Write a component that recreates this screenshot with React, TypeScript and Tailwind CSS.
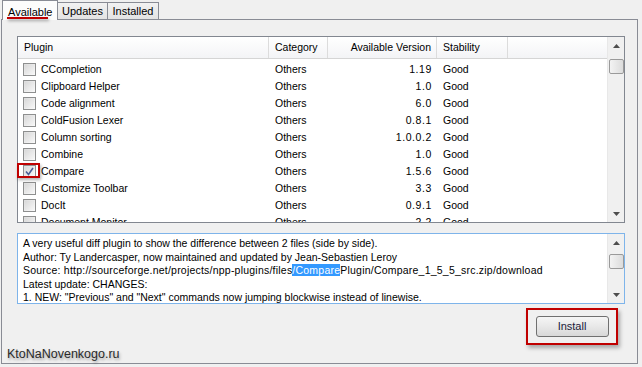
import React from "react";

const rows: [string, string, string, string][] = [
  ["CCompletion", "Others", "1.19", "Good"],
  ["Clipboard Helper", "Others", "1.0", "Good"],
  ["Code alignment", "Others", "6.0", "Good"],
  ["ColdFusion Lexer", "Others", "0.8.1", "Good"],
  ["Column sorting", "Others", "1.0.0.2", "Good"],
  ["Combine", "Others", "1.0", "Good"],
  ["Compare", "Others", "1.5.6", "Good"],
  ["Customize Toolbar", "Others", "3.3", "Good"],
  ["DocIt", "Others", "0.9.1", "Good"],
  ["Document Monitor", "Others", "2.2", "Good"],
];

function Checkbox({ checked }: { checked?: boolean }) {
  return (
    <div className="w-[13px] h-[13px] border border-[#8e8f8f] bg-gradient-to-br from-[#dcdcdc] to-[#fbfbfb] flex items-center justify-center shrink-0">
      <div className="w-[9px] h-[9px] bg-gradient-to-br from-[#d9d9d9] to-[#f6f6f6] flex items-center justify-center">
        {checked && (
          <svg width="9" height="9" viewBox="0 0 9 9">
            <path d="M1 4.5 L3.5 7.5 L8 1" stroke="#4a5f97" strokeWidth="1.6" fill="none" />
          </svg>
        )}
      </div>
    </div>
  );
}

function UpArrow() {
  return (
    <svg width="7" height="4" viewBox="0 0 7 4">
      <path d="M0 4 L3.5 0 L7 4 Z" fill="#4d4d4d" />
    </svg>
  );
}
function DownArrow() {
  return (
    <svg width="7" height="4" viewBox="0 0 7 4">
      <path d="M0 0 L3.5 4 L7 0 Z" fill="#4d4d4d" />
    </svg>
  );
}

function Scrollbar({ thumbTop }: { thumbTop: number }) {
  return (
    <div className="w-[17px] h-full shrink-0 bg-[#f0f0f0] border-l border-[#e8e8e8] flex flex-col items-center">
      <div className="h-[17px] w-full shrink-0 flex items-center justify-center">
        <UpArrow />
      </div>
      <div className="flex-1 w-full relative">
        <div
          className="absolute left-[1px] w-[15px] h-[15px] rounded-[2px] border border-[#9a9a9a] bg-gradient-to-r from-[#f3f3f3] to-[#dcdcdc]"
          style={{ top: thumbTop }}
        />
      </div>
      <div className="h-[17px] w-full shrink-0 flex items-center justify-center">
        <DownArrow />
      </div>
    </div>
  );
}

export default function App() {
  return (
    <div
      className="w-[642px] h-[367px] bg-[#f0f0f0] relative overflow-hidden text-[10.5px] text-black"
      style={{ fontFamily: '"Liberation Sans", Arial, sans-serif' }}
    >
      {/* Tabs */}
      <div className="flex items-end h-[20px] pl-[2px] relative z-10">
        <div className="relative w-[56px] h-[20px] bg-[#fcfcfc] border border-b-0 border-[#898c95] flex items-start pt-[3px] pl-[5px] text-[11px]">
          <span>Available</span>
          <div className="absolute left-[4px] top-[16px] w-[41px] h-[2px] bg-[#c00000] shadow-[1px_2px_3px_rgba(0,0,0,0.35)]" />
        </div>
        <div className="w-[50px] h-[17px] mb-[1px] bg-gradient-to-b from-[#f2f2f2] to-[#e3e3e3] border border-b-0 border-l-0 border-[#898c95] flex items-center justify-center text-[11px]">
          Updates
        </div>
        <div className="w-[51px] h-[17px] mb-[1px] bg-gradient-to-b from-[#f2f2f2] to-[#e3e3e3] border border-b-0 border-l-0 border-[#898c95] flex items-center justify-center text-[11px]">
          Installed
        </div>
      </div>

      {/* Panel */}
      <div className="ml-[1px] -mt-[1px] w-[637px] h-[345px] border border-[#898c95] bg-[#f0f0f0] pt-[16px] pl-[15px] flex flex-col">
        {/* List */}
        <div className="w-[608px] h-[187px] shrink-0 border border-[#828790] bg-white flex">
          <div className="flex-1 flex flex-col overflow-hidden">
            <div className="h-[22px] shrink-0 flex bg-gradient-to-b from-white to-[#f3f4f6] border-b border-[#d5d5d5] text-[#000]">
              <div className="w-[251px] pl-[6px] flex items-center border-r border-[#dcdcdc]">Plugin</div>
              <div className="w-[59px] pl-[6px] flex items-center border-r border-[#dcdcdc]">Category</div>
              <div className="w-[109px] pr-[5px] flex items-center justify-end border-r border-[#dcdcdc]">Available Version</div>
              <div className="w-[71px] pl-[6px] flex items-center border-r border-[#dcdcdc]">Stability</div>
              <div className="flex-1" />
            </div>
            <div className="pt-[2px] flex flex-col">
              {rows.map(([name, cat, ver, stab]) => (
                <div key={name} className="h-[17px] flex items-center shrink-0">
                  <div className="w-[251px] flex items-center pl-[5px] gap-[5px]">
                    <Checkbox checked={name === "Compare"} />
                    <span>{name}</span>
                  </div>
                  <div className="w-[59px] pl-[6px]">{cat}</div>
                  <div className="w-[109px] pr-[5px] text-right tracking-[0.6px]">{ver}</div>
                  <div className="w-[71px] pl-[6px]">{stab}</div>
                </div>
              ))}
            </div>
          </div>
          <Scrollbar thumbTop={5} />
        </div>

        {/* Description */}
        <div className="mt-[10px] w-[608px] h-[71px] shrink-0 border border-[#7eb4ea] bg-white flex">
          <div className="flex-1 pl-[5px] pt-[3px] leading-[13.5px] overflow-hidden whitespace-nowrap">
            <div>A very useful diff plugin to show the difference between 2 files (side by side).</div>
            <div>Author: Ty Landercasper, now maintained and updated by Jean-Sebastien Leroy</div>
            <div className="tracking-[0.22px]">
              Source: http://sourceforge.net/projects/npp-plugins/files
              <span className="bg-[#3399ff] text-white">/Compare</span>
              Plugin/Compare_1_5_5_src.zip/download
            </div>
            <div>Latest update: CHANGES:</div>
            <div>1. NEW: "Previous" and "Next" commands now jumping blockwise instead of linewise.</div>
          </div>
          <Scrollbar thumbTop={3} />
        </div>

        {/* Install */}
        <div className="flex justify-end pr-[19px] mt-[4px]">
          <div className="w-[92px] h-[37px] border-2 border-[#c00000] shadow-[2px_3px_4px_rgba(0,0,0,0.3)] flex items-center justify-center">
            <button className="w-[73px] h-[21px] rounded-[3px] border border-[#707070] bg-gradient-to-b from-[#f6f6f6] via-[#e8e8e8] to-[#d8d8d8] text-[11px] text-[#1a1a3a]">
              Install
            </button>
          </div>
        </div>
      </div>

      {/* Red marker around checked checkbox */}
      <div className="absolute left-[17px] top-[163px] w-[23px] h-[15px] border-2 border-[#c00000] shadow-[1px_2px_3px_rgba(0,0,0,0.3)]" />

      {/* Watermark */}
      <div
        className="absolute left-[7px] top-[345px] text-[12.5px] text-[#2a2a2a]"
        style={{ textShadow: "1px 2px 3px rgba(0,0,0,0.35)", fontFamily: '"Liberation Sans", Arial, sans-serif' }}
      >
        KtoNaNovenkogo.ru
      </div>
    </div>
  );
}
